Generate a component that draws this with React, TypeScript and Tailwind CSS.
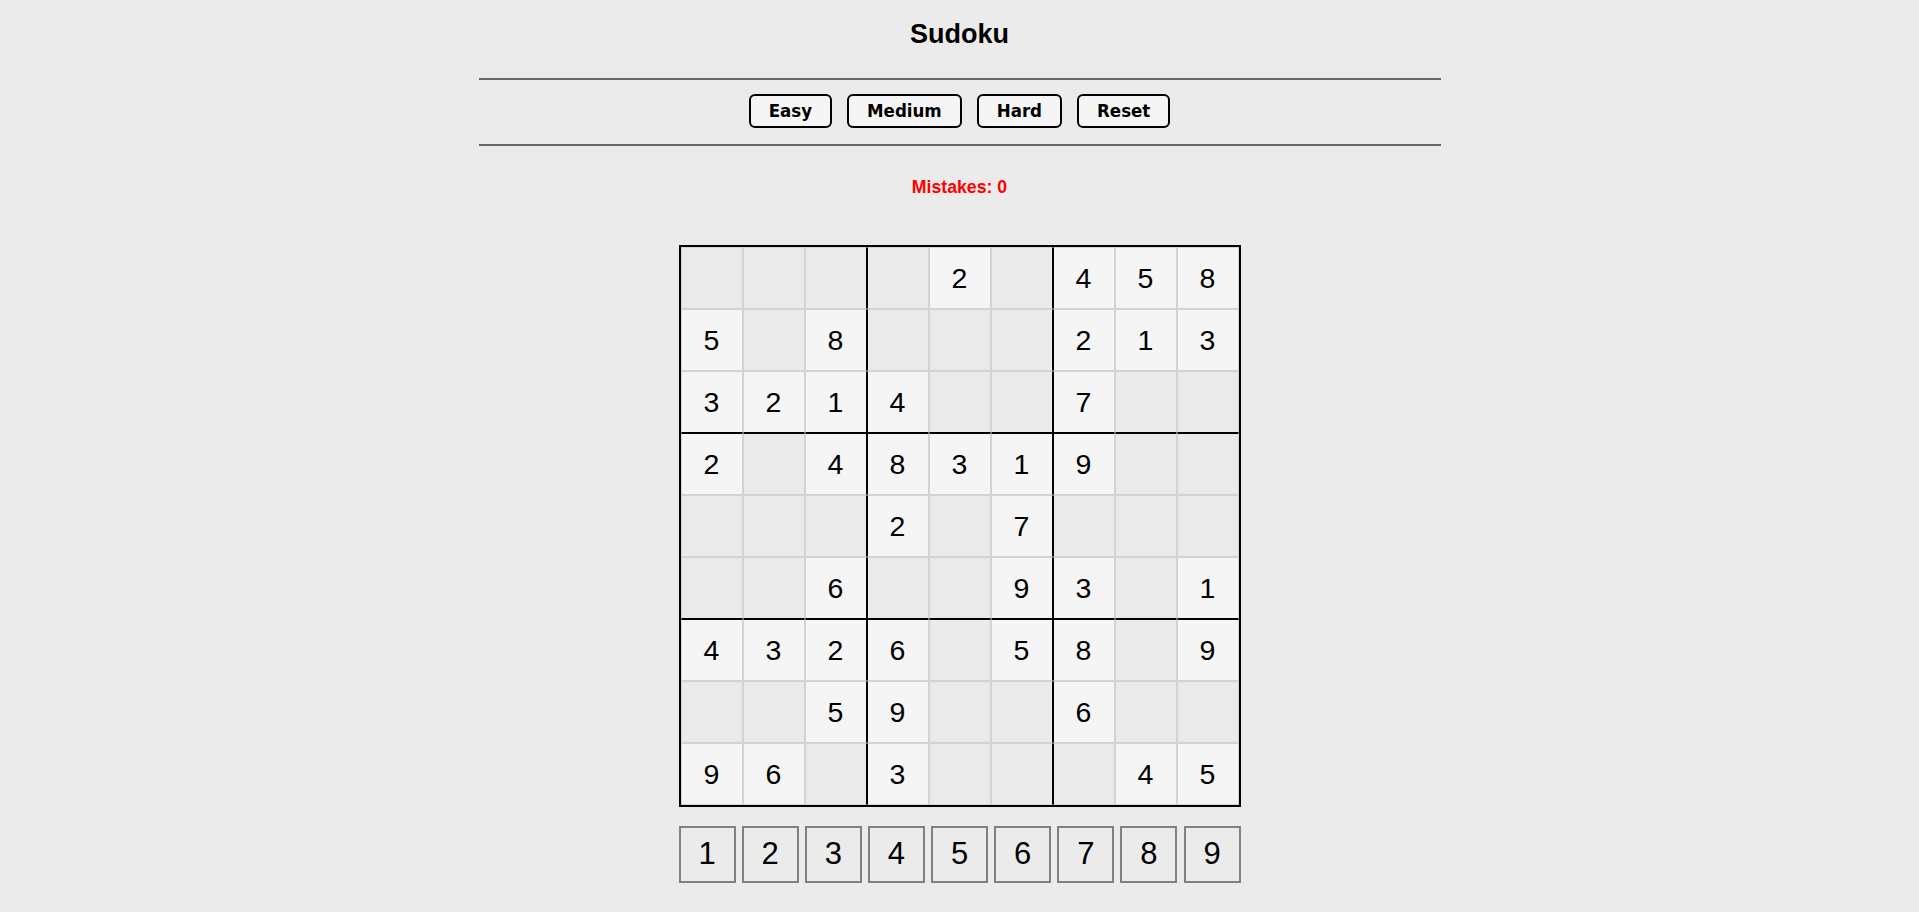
const puzzle: number[][] = [
  [0, 0, 0, 0, 2, 0, 4, 5, 8],
  [5, 0, 8, 0, 0, 0, 2, 1, 3],
  [3, 2, 1, 4, 0, 0, 7, 0, 0],
  [2, 0, 4, 8, 3, 1, 9, 0, 0],
  [0, 0, 0, 2, 0, 7, 0, 0, 0],
  [0, 0, 6, 0, 0, 9, 3, 0, 1],
  [4, 3, 2, 6, 0, 5, 8, 0, 9],
  [0, 0, 5, 9, 0, 0, 6, 0, 0],
  [9, 6, 0, 3, 0, 0, 0, 4, 5],
];

const levels = ["Easy", "Medium", "Hard", "Reset"];

function Cell({ value, r, c }: { value: number; r: number; c: number }) {
  // box edges get black borders on both sides so the line reads 2px
  const right = c === 2 || c === 5 ? "border-r-black" : "";
  const left = c === 3 || c === 6 ? "border-l-black" : "";
  const bottom = r === 2 || r === 5 ? "border-b-black" : "";
  const top = r === 3 || r === 6 ? "border-t-black" : "";
  return (
    <div
      className={`w-[62px] h-[62px] box-border border border-[#d3d3d3] flex items-center justify-center text-[28.5px] text-black ${
        value ? "bg-[#f5f5f5]" : "bg-[#eaeaea]"
      } ${right} ${left} ${bottom} ${top}`}
    >
      {value || ""}
    </div>
  );
}

export default function App() {
  return (
    <div className="min-h-[912px] w-full bg-[#ebebeb] flex flex-col items-center font-['Liberation_Sans',Arial,sans-serif]">
      <h1 className="pt-[19px] text-[27px] leading-[31px] font-bold text-black">Sudoku</h1>

      <hr className="mt-[28px] w-[962px] h-0 border-0 border-t-2 border-[#666]" />
      <div className="flex gap-[15px] mt-[14px] font-['DejaVu_Sans_Condensed','DejaVu_Sans',sans-serif] font-stretch-condensed">
        {levels.map((l) => (
          <button
            key={l}
            className="h-[34px] px-[18px] text-[18.5px] leading-[20px] font-bold text-black bg-[#f5f5f5] border-2 border-black rounded-[6px]"
          >
            {l}
          </button>
        ))}
      </div>
      <hr className="mt-[16px] w-[962px] h-0 border-0 border-t-2 border-[#666]" />

      <p className="mt-[31px] text-[17.7px] leading-[20px] font-bold text-[#ff0000]">Mistakes: 0</p>

      <div className="mt-[48px] border-2 border-black flex flex-col">
        {puzzle.map((row, r) => (
          <div key={r} className="flex">
            {row.map((v, c) => (
              <Cell key={c} value={v} r={r} c={c} />
            ))}
          </div>
        ))}
      </div>

      <div className="mt-[19px] w-[562px] flex justify-between">
        {[1, 2, 3, 4, 5, 6, 7, 8, 9].map((n) => (
          <button
            key={n}
            className="w-[57px] h-[57px] border-2 border-[#808080] bg-[#ebebeb] text-[31px] text-black flex items-center justify-center"
          >
            {n}
          </button>
        ))}
      </div>
    </div>
  );
}
